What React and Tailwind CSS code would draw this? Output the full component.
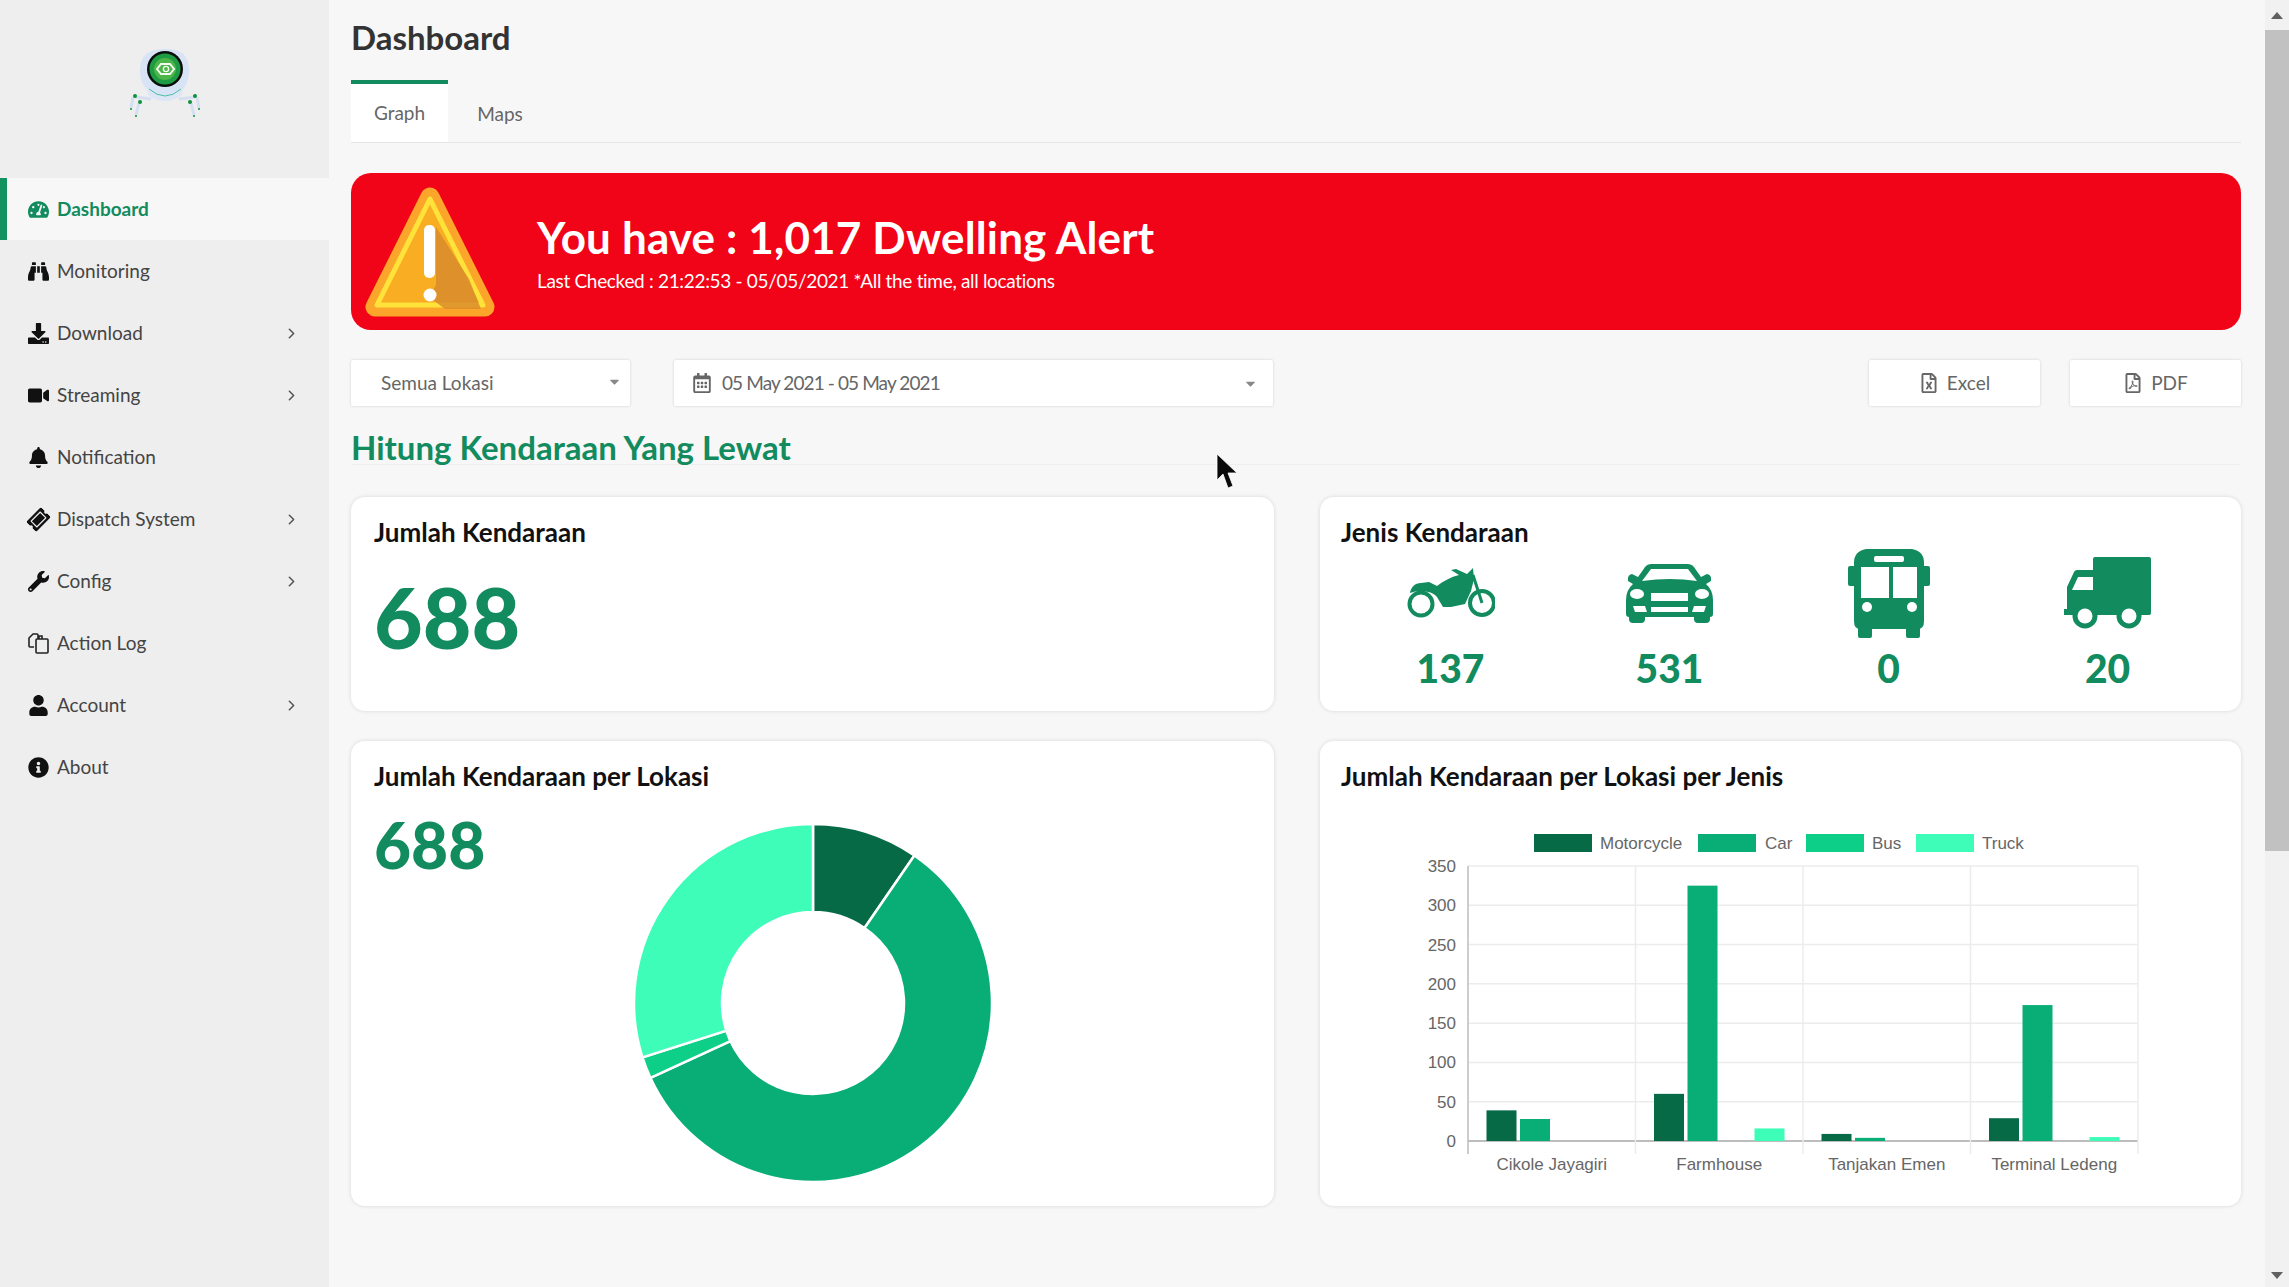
import React from 'react'
import { ChevronRight } from 'lucide-react'
import {
  FaTachometerAlt, FaBinoculars, FaDownload, FaVideo, FaBell, FaTicketAlt, FaWrench,
  FaUser, FaInfoCircle, FaCaretDown, FaRegCalendarAlt, FaRegFileExcel, FaRegFilePdf,
} from 'react-icons/fa'

const ActionLogIcon = ({ size }) => (
  <svg width={size} height={size} viewBox="0 0 21 21" fill="none" stroke="#222" strokeWidth="1.6">
    <path d="M6 14 H2 Q1 14 1 13 V5 L5 1 H9 Q10 1 10 2 V6" />
    <rect x="8" y="6" width="12" height="14" rx="1" />
    <path d="M11 6 V3 H14 V6" />
  </svg>
)

const MENU = [
  { label: 'Dashboard', icon: FaTachometerAlt, active: true },
  { label: 'Monitoring', icon: FaBinoculars },
  { label: 'Download', icon: FaDownload, arrow: true },
  { label: 'Streaming', icon: FaVideo, arrow: true },
  { label: 'Notification', icon: FaBell },
  { label: 'Dispatch System', icon: FaTicketAlt, arrow: true, tilt: true },
  { label: 'Config', icon: FaWrench, arrow: true },
  { label: 'Action Log', icon: ActionLogIcon },
  { label: 'Account', icon: FaUser, arrow: true },
  { label: 'About', icon: FaInfoCircle },
]

const COLORS = { moto: '#076a46', car: '#09ae76', bus: '#0dcf87', truck: '#3dfdb8' }

const RobotLogo = () => (
  <svg width="76" height="76" viewBox="0 0 76 76">
    <path d="M38 2 C52 2 62 6 62 24 C62 40 52 50 38 50 C24 50 13 40 13 24 C13 6 24 2 38 2Z" fill="#d8e3f5" />
    <path d="M20 40 Q38 56 56 40 L55 48 Q38 60 21 48Z" fill="#dde6f5" />
    <path d="M22 42 Q38 56 54 42" fill="none" stroke="#25b58e" strokeWidth="0.8" />
    <path d="M8 50 L24 52 M68 50 L52 52 M6 50 L4 61 M70 50 L72 61 M12 56 L9 68 M64 56 L67 68" stroke="#d4dff2" strokeWidth="3" />
    <circle cx="8" cy="49" r="2" fill="#0d8f3c" />
    <circle cx="68" cy="49" r="2" fill="#0d8f3c" />
    <circle cx="13" cy="55" r="2" fill="#0d8f3c" />
    <circle cx="63" cy="55" r="2" fill="#0d8f3c" />
    <circle cx="4" cy="62" r="1" fill="#0d8f3c" />
    <circle cx="72" cy="62" r="1" fill="#0d8f3c" />
    <circle cx="9" cy="69" r="1" fill="#0d8f3c" />
    <circle cx="67" cy="69" r="1" fill="#0d8f3c" />
    <circle cx="38" cy="22" r="18" fill="#0b0f0c" />
    <circle cx="38" cy="22" r="15.5" fill="#1f9b43" />
    <circle cx="38" cy="22" r="11" fill="#4cb648" />
    <path d="M30 22 L34 17 H43 L47 22 L43 27 H34Z" fill="none" stroke="#f3fbf0" strokeWidth="2" />
    <circle cx="39" cy="22" r="2.6" fill="none" stroke="#f3fbf0" strokeWidth="1.4" />
  </svg>
)

const WarningIcon = () => (
  <svg width="130" height="130" viewBox="0 0 130 130">
    <path d="M65 10 L10 120 H120Z" fill="#fba52a" stroke="#fba52a" strokeWidth="19" strokeLinejoin="round" />
    <path d="M65 12 L12 118 H118Z" fill="#f9ad22" stroke="#ffe23a" strokeWidth="5" strokeLinejoin="round" />
    <path d="M71 40 L71 98 L64 110 L80 122 H116 L104 92Z" fill="#d98c2c" opacity="0.85" />
    <rect x="59" y="38" width="11" height="53" rx="5" fill="#fff" />
    <circle cx="65" cy="108" r="6.5" fill="#fff" />
  </svg>
)

const Motorcycle = () => (
  <svg width="88" height="52" viewBox="0 0 88 52" fill="#128b5e">
    <circle cx="14" cy="37" r="11.5" fill="none" stroke="#128b5e" strokeWidth="4" />
    <circle cx="75" cy="36" r="12" fill="none" stroke="#128b5e" strokeWidth="4" />
    <path d="M3 26 C4 20 8 16 14 16 L22 15 L30 19 C36 14 44 10 52 8 L44 3 L49 2 L60 7 L66 1 L67 12 L64 24 L58 37 L44 40 L36 40 L30 30 C26 24 12 22 3 26Z" />
    <path d="M66 8 L75 36" stroke="#128b5e" strokeWidth="3" fill="none" />
  </svg>
)

const Car = () => (
  <svg width="87" height="59" viewBox="0 0 87 59" fill="#128b5e">
    <path d="M25 0 H62 Q67 0 70 6 L75 13 L81 10 Q86 11 85 17 L80 20 Q87 26 87 36 V50 Q87 53 84 53 V55 Q84 59 80 59 H72 Q68 59 68 55 V53 H19 V55 Q19 59 15 59 H7 Q3 59 3 55 V53 Q0 53 0 50 V36 Q0 26 7 20 L2 17 Q1 11 6 10 L12 13 L17 6 Q20 0 25 0Z" />
    <path d="M25 5 H62 L71 17 Q44 13 16 17Z" fill="#fff" />
    <ellipse cx="11" cy="30" rx="7" ry="5" fill="#fff" />
    <ellipse cx="76" cy="30" rx="7" ry="5" fill="#fff" />
    <rect x="25" y="29" width="37" height="8" fill="#fff" />
    <rect x="25" y="43" width="37" height="5" fill="#fff" />
    <path d="M7 42 H19 L21 48 H9Z M80 42 H68 L66 48 H78Z" fill="#fff" />
  </svg>
)

const Bus = () => (
  <svg width="82" height="89" viewBox="0 0 82 89" fill="#128b5e">
    <path d="M18 0 H64 Q76 2 76 14 V72 Q76 80 70 80 H12 Q6 80 6 72 V14 Q6 2 18 0Z" />
    <rect x="0" y="17" width="8" height="20" rx="2" />
    <rect x="74" y="17" width="8" height="20" rx="2" />
    <rect x="10" y="76" width="14" height="13" rx="2" />
    <rect x="58" y="76" width="14" height="13" rx="2" />
    <rect x="26" y="7" width="30" height="6" rx="2" fill="#fff" />
    <rect x="13" y="18" width="28" height="31" fill="#fff" />
    <rect x="45" y="18" width="24" height="31" fill="#fff" />
    <circle cx="19" cy="58" r="5" fill="#fff" />
    <circle cx="64" cy="58" r="5" fill="#fff" />
  </svg>
)

const Truck = () => (
  <svg width="87" height="72" viewBox="0 0 87 72" fill="#128b5e">
    <rect x="29" y="0" width="58" height="58" rx="2" />
    <path d="M29 13 H13 Q11 13 10 15 L3 30 V52 H0 V58 H29Z" />
    <path d="M14 20 H29 V33 H8Z" fill="#fff" />
    <circle cx="21" cy="59" r="12.5" />
    <circle cx="65" cy="59" r="12.5" />
    <circle cx="21" cy="59" r="7.5" fill="#fff" />
    <circle cx="65" cy="59" r="7.5" fill="#fff" />
  </svg>
)

const DONUT = [
  { from: 0, to: 34.5, color: COLORS.moto },
  { from: 34.5, to: 245.3, color: COLORS.car },
  { from: 245.3, to: 252.3, color: COLORS.bus },
  { from: 252.3, to: 360, color: COLORS.truck },
]

const slicePath = (from, to, r, R) => {
  const pt = (a, rad) => {
    const t = ((a - 90) * Math.PI) / 180
    return `${(180 + rad * Math.cos(t)).toFixed(2)} ${(180 + rad * Math.sin(t)).toFixed(2)}`
  }
  const big = to - from > 180 ? 1 : 0
  return `M${pt(from, R)} A${R} ${R} 0 ${big} 1 ${pt(to, R)} L${pt(to, r)} A${r} ${r} 0 ${big} 0 ${pt(from, r)}Z`
}

const Donut = () => (
  <svg width="360" height="360" viewBox="0 0 360 360">
    {DONUT.map((s) => (
      <path key={s.from} d={slicePath(s.from, s.to, 91, 179)} fill={s.color} stroke="#fff" strokeWidth="2.5" />
    ))}
  </svg>
)

const BARS = [
  { name: 'Cikole Jayagiri', moto: 39, car: 28, bus: 0, truck: 0 },
  { name: 'Farmhouse', moto: 60, car: 325, bus: 0, truck: 16 },
  { name: 'Tanjakan Emen', moto: 9, car: 4, bus: 0, truck: 0 },
  { name: 'Terminal Ledeng', moto: 29, car: 173, bus: 0, truck: 5 },
]

const LEGEND = [
  { label: 'Motorcycle', color: COLORS.moto, x: 174, tx: 240 },
  { label: 'Car', color: COLORS.car, x: 338, tx: 405 },
  { label: 'Bus', color: COLORS.bus, x: 446, tx: 512 },
  { label: 'Truck', color: COLORS.truck, x: 556, tx: 622 },
]

const BarChart = () => {
  const left = 108
  const band = 167.5
  const zero = 322
  const unit = 275 / 350
  const font = '"Liberation Sans", Arial, sans-serif'
  return (
    <svg width="800" height="370" viewBox="0 0 800 370" fontFamily={font} fontSize="17" fill="#666">
      {LEGEND.map((l) => (
        <g key={l.label}>
          <rect x={l.x} y="15" width="58" height="18" fill={l.color} />
          <text x={l.tx} y="29.5">{l.label}</text>
        </g>
      ))}
      {[0, 50, 100, 150, 200, 250, 300, 350].map((v) => (
        <g key={v}>
          <line x1={left} x2={left + band * 4} y1={zero - v * unit} y2={zero - v * unit} stroke={v === 0 ? '#bdbdbd' : '#ececec'} strokeWidth={v === 0 ? 2 : 1.5} />
          <text x="96" y={zero - v * unit + 6} textAnchor="end">{v}</text>
        </g>
      ))}
      {[0, 1, 2, 3, 4].map((i) => (
        <line key={i} x1={left + band * i} x2={left + band * i} y1="47" y2="335" stroke={i === 0 ? '#bdbdbd' : '#ececec'} strokeWidth="1.5" />
      ))}
      {BARS.map((b, i) => (
        <g key={b.name}>
          {['moto', 'car', 'bus', 'truck'].map((k, j) => (
            <rect key={k} x={left + band * i + 18.5 + j * 33.5} y={zero - b[k] * unit} width="30" height={b[k] * unit} fill={COLORS[k]} />
          ))}
          <text x={left + band * i + band / 2} y="351" textAnchor="middle">{b.name}</text>
        </g>
      ))}
    </svg>
  )
}

const Cursor = () => (
  <svg className="absolute left-[1216px] top-[453px]" width="22" height="36" viewBox="0 0 22 36">
    <path d="M1 1 V27 L7 21 L12 35 L17 33 L12 20 H21Z" fill="#0a0a0a" stroke="#fff" strokeWidth="0.8" />
  </svg>
)

const Card = ({ title, children, className }) => (
  <div className={'rounded-[14px] bg-white shadow-[0_0_4px_rgba(0,0,0,0.13)] ' + className}>
    <h3 className="pt-[20px] text-[26px] leading-[30px] font-bold text-[#111]">{title}</h3>
    {children}
  </div>
)

const Vehicle = ({ icon, value }) => (
  <div className="flex flex-col items-center">
    <div className="flex h-[90px] items-center">{icon}</div>
    <div className="mt-[7px] text-[39px] leading-[46px] font-black text-[#128b5e]">{value}</div>
  </div>
)

const OutlineButton = ({ icon: Icon, label }) => (
  <button className="flex h-[46px] w-[171px] items-center justify-center gap-[8px] rounded-[2px] bg-white text-[19px] text-[#666] shadow-[0_0_3px_rgba(0,0,0,0.16)]">
    <Icon size={20} />
    {label}
  </button>
)

export default function App() {
  return (
    <div className="relative flex h-[1287px] w-[2289px] overflow-hidden bg-[#f7f7f7] font-['Lato','Noto_Sans',sans-serif]">
      <aside className="w-[329px] shrink-0 bg-[#eeeeee]">
        <div className="flex h-[178px] justify-center pt-[47px]">
          <RobotLogo />
        </div>
        <nav>
          {MENU.map((m) => {
            const Icon = m.icon
            return (
              <div
                key={m.label}
                className={
                  m.active
                    ? 'flex h-[62px] items-center border-l-[7px] border-[#13915f] bg-[#f7f7f7] pr-[29px] pl-[21px] text-[#128b5e]'
                    : 'flex h-[62px] items-center pr-[29px] pl-[28px] text-[#444]'
                }
              >
                <span className={m.active ? 'w-[29px]' : 'w-[29px] text-[#111]'}>
                  <Icon size={21} className={m.tilt ? '-rotate-45' : ''} />
                </span>
                <span className={m.active ? 'flex-1 text-[19px] font-bold' : 'flex-1 text-[19px]'}>{m.label}</span>
                {m.arrow && <ChevronRight size={17} strokeWidth={2.2} className="text-[#555]" />}
              </div>
            )
          })}
        </nav>
      </aside>

      <main className="min-w-0 flex-1 pr-[24px] pl-[22px]">
        <h1 className="flex h-[80px] items-center pb-[4px] text-[33px] font-bold text-[#333]">Dashboard</h1>
        <div className="flex h-[63px] border-b border-[#e6e6e6] text-[19px] text-[#666]">
          <div className="flex w-[97px] items-center justify-center border-t-4 border-[#128b5e] bg-white pt-[1px]">Graph</div>
          <div className="flex w-[104px] items-center justify-center pt-[6px]">Maps</div>
        </div>

        <section className="mt-[30px] flex h-[157px] items-center rounded-[20px] bg-[#f10417] pl-[14px] text-white">
          <WarningIcon />
          <div className="ml-[42px]">
            <div className="text-[44px] leading-[52px] font-bold tracking-[0.15px]">You have : 1,017 Dwelling Alert</div>
            <div className="mt-[6px] text-[19px] leading-[24px] tracking-[-0.32px]">Last Checked : 21:22:53 - 05/05/2021 *All the time, all locations</div>
          </div>
        </section>

        <div className="mt-[30px] flex h-[46px] text-[19px] text-[#666]">
          <div className="flex w-[279px] items-center justify-between rounded-[2px] bg-white pr-[8px] pl-[30px] shadow-[0_0_3px_rgba(0,0,0,0.16)]">
            Semua Lokasi
            <FaCaretDown size={15} className="mb-[4px] text-[#888]" />
          </div>
          <div className="ml-[44px] flex w-[599px] items-center rounded-[2px] bg-white pr-[15px] pl-[18px] shadow-[0_0_3px_rgba(0,0,0,0.16)]">
            <FaRegCalendarAlt size={20} className="mr-[10px]" />
            <span className="flex-1 tracking-[-0.9px]">05 May 2021 - 05 May 2021</span>
            <FaCaretDown size={15} className="text-[#888]" />
          </div>
          <div className="ml-auto flex gap-[30px]">
            <OutlineButton icon={FaRegFileExcel} label="Excel" />
            <OutlineButton icon={FaRegFilePdf} label="PDF" />
          </div>
        </div>

        <h2 className="h-[59px] border-b border-[#efefef] pt-[21px] text-[33px] leading-[40px] font-bold text-[#128b5e]">Hitung Kendaraan Yang Lewat</h2>

        <div className="mt-[32px] grid grid-cols-[923px_1fr] gap-x-[46px] gap-y-[30px]">
          <Card title="Jumlah Kendaraan" className="h-[214px] px-[23px]">
            <div className="mt-[22px] text-[84px] leading-[96px] font-black text-[#128b5e]">688</div>
          </Card>
          <Card title="Jenis Kendaraan" className="h-[214px] pr-[24px] pl-[21px]">
            <div className="mt-[1px] grid grid-cols-4">
              <Vehicle icon={<Motorcycle />} value="137" />
              <Vehicle icon={<Car />} value="531" />
              <Vehicle icon={<Bus />} value="0" />
              <Vehicle icon={<Truck />} value="20" />
            </div>
          </Card>
          <Card title="Jumlah Kendaraan per Lokasi" className="flex h-[465px] flex-col px-[23px]">
            <div className="relative flex-1">
              <div className="mt-[17px] text-[64px] leading-[74px] font-black text-[#128b5e]">688</div>
              <div className="absolute top-[32px] left-[259px]">
                <Donut />
              </div>
            </div>
          </Card>
          <Card title="Jumlah Kendaraan per Lokasi per Jenis" className="h-[465px] pr-[24px] pl-[21px]">
            <div className="mt-[28px] ml-[19px]">
              <BarChart />
            </div>
          </Card>
        </div>
      </main>

      <div className="flex w-[24px] shrink-0 flex-col bg-[#f1f1f1]">
        <div className="flex h-[30px] items-center justify-center">
          <div className="h-0 w-0 border-x-[6px] border-b-[7px] border-x-transparent border-b-[#606060]" />
        </div>
        <div className="h-[821px] bg-[#c1c1c1]" />
        <div className="mt-auto flex h-[24px] items-center justify-center">
          <div className="h-0 w-0 border-x-[6px] border-t-[7px] border-x-transparent border-t-[#606060]" />
        </div>
      </div>

      <Cursor />
    </div>
  )
}
